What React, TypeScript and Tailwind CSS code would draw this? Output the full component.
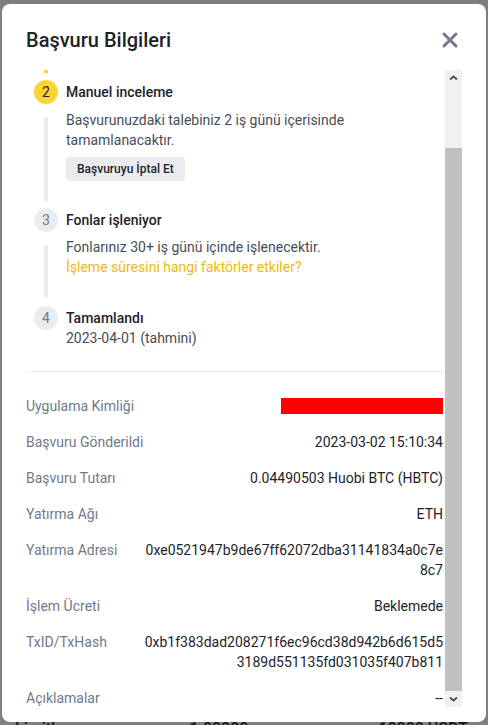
import { useLayoutEffect, useRef } from "react";

/**
 * Application details modal (Başvuru Bilgileri).
 * Timeline of the refund steps, then a list of key/value rows.
 * The body is scrolled to the bottom; the scrollbar beside it is drawn
 * by hand so it looks the same wherever the page is shot.
 */

const font = { fontFamily: "Roboto, 'Liberation Sans', sans-serif" };

type Row = { label: string; value?: string[]; redacted?: boolean };

const rows: Row[] = [
  { label: "Uygulama Kimliği", redacted: true },
  { label: "Başvuru Gönderildi", value: ["2023-03-02 15:10:34"] },
  { label: "Başvuru Tutarı", value: ["0.04490503 Huobi BTC (HBTC)"] },
  { label: "Yatırma Ağı", value: ["ETH"] },
  {
    label: "Yatırma Adresi",
    value: ["0xe0521947b9de67ff62072dba31141834a0c7e", "8c7"],
  },
  { label: "İşlem Ücreti", value: ["Beklemede"] },
  {
    label: "TxID/TxHash",
    value: ["0xb1f383dad208271f6ec96cd38d942b6d615d5", "3189d551135fd031035f407b811"],
  },
  { label: "Açıklamalar", value: ["--"] },
];

function StepDot({ n, active }: { n: number; active?: boolean }) {
  return (
    <span
      className={[
        "flex h-6 w-6 shrink-0 items-center justify-center rounded-full text-sm",
        active ? "bg-[#FCD535] text-[#1E2329]" : "bg-[#EAECEF] text-[#707A8A]",
      ].join(" ")}
    >
      {n}
    </span>
  );
}

function CloseIcon() {
  return (
    <svg width="24" height="24" viewBox="0 0 24 24" fill="none">
      <path
        d="M6 6L18 18M18 6L6 18"
        stroke="#707A8A"
        strokeWidth="3"
        strokeLinecap="round"
      />
    </svg>
  );
}

function Chevron({ down }: { down?: boolean }) {
  return (
    <svg width="9" height="6" viewBox="0 0 9 6" fill="none">
      <path
        d={down ? "M1 1.5L4.5 4.5L8 1.5" : "M1 4.5L4.5 1.5L8 4.5"}
        stroke="#505050"
        strokeWidth="2"
      />
    </svg>
  );
}

function Scrollbar() {
  return (
    <div className="mb-px flex w-[17px] shrink-0 flex-col bg-[#F1F1F1]">
      <div className="flex h-4 items-center justify-center">
        <Chevron />
      </div>
      <div className="h-[62px]" />
      <div className="flex-1 bg-[#C1C1C1]" />
      <div className="flex h-4 items-center justify-center">
        <Chevron down />
      </div>
    </div>
  );
}

export default function App() {
  const scroller = useRef<HTMLDivElement>(null);

  useLayoutEffect(() => {
    const el = scroller.current;
    if (el) el.scrollTop = el.scrollHeight;
  }, []);

  return (
    <div className="relative h-[725px] w-[488px] overflow-hidden bg-[#7f7f7f]" style={font}>
      {/* page behind the overlay, only its edge shows */}
      <div className="absolute left-0 right-0 top-[717px] flex text-base font-medium text-[#141517]">
        <span className="ml-[15px]">Limitler</span>
        <span className="ml-[120px]">1.00000</span>
        <span className="ml-[130px]">10000 USDT</span>
      </div>

      <div className="relative ml-[2px] mt-[4px] flex h-[718px] w-[484px] flex-col rounded-[8px] bg-white px-6 pb-[14px] pt-[22px]">
        <div className="flex h-7 items-center justify-between">
          <h2 className="text-[20px] font-medium leading-7 text-[#1E2329]">Başvuru Bilgileri</h2>
          <button type="button" aria-label="Kapat">
            <CloseIcon />
          </button>
        </div>

        <div className="mt-4 flex min-h-0 flex-1">
          <div ref={scroller} className="min-w-0 flex-1 overflow-hidden">
            {/* Step 1 */}
            <div className="flex">
              <div className="flex w-10 flex-col items-center">
                <StepDot n={1} active />
                <span className="mb-[7px] mt-[13px] w-1 flex-1 bg-[#FCD535]" />
              </div>
              <div className="pb-[33px]">
                <p className="text-sm font-medium leading-6 text-[#1E2329]">Başvuru gönderildi</p>
                <p className="mt-[6px] text-sm leading-5 text-[#474D57]">2023-03-02 15:10:34</p>
              </div>
            </div>

            {/* Step 2 */}
            <div className="flex">
              <div className="flex w-10 flex-col items-center">
                <StepDot n={2} active />
                <span className="mb-[6px] mt-[13px] w-1 flex-1 bg-[#EAECEF]" />
              </div>
              <div className="pb-[27px]">
                <p className="text-sm font-medium leading-6 text-[#1E2329]">Manuel inceleme</p>
                <p className="mt-[6px] text-sm leading-5 text-[#474D57]">
                  Başvurunuzdaki talebiniz 2 iş günü içerisinde
                  <br />
                  tamamlanacaktır.
                </p>
                <button
                  type="button"
                  className="mt-[7px] h-6 rounded-[4px] bg-[#EAECEF] px-[11px] text-xs font-medium text-[#1E2329]"
                >
                  Başvuruyu İptal Et
                </button>
              </div>
            </div>

            {/* Step 3 */}
            <div className="flex">
              <div className="flex w-10 flex-col items-center">
                <StepDot n={3} />
                <span className="mb-[8px] mt-[13px] w-1 flex-1 bg-[#EAECEF]" />
              </div>
              <div className="pb-[29px]">
                <p className="text-sm font-medium leading-6 text-[#1E2329]">Fonlar işleniyor</p>
                <p className="mt-[5px] text-sm leading-5 text-[#474D57]">
                  Fonlarınız 30+ iş günü içinde işlenecektir.
                </p>
                <a className="block text-sm leading-5 text-[#F0B90B]">
                  İşleme süresini hangi faktörler etkiler?
                </a>
              </div>
            </div>

            {/* Step 4 */}
            <div className="flex">
              <div className="flex w-10 flex-col items-center">
                <StepDot n={4} />
              </div>
              <div className="pt-[2px]">
                <p className="text-sm font-medium leading-5 text-[#1E2329]">Tamamlandı</p>
                <p className="text-sm leading-5 text-[#474D57]">2023-04-01 (tahmini)</p>
              </div>
            </div>

            <div className="mt-[23px] h-px bg-[#EAECEF]" />

            <dl className="mt-6 flex flex-col gap-4 pr-[2px] text-sm leading-5">
              {rows.map((r) => (
                <div key={r.label} className="flex items-start justify-between gap-4">
                  <dt className="shrink-0 text-[#707A8A]">{r.label}</dt>
                  {r.redacted ? (
                    <dd className="mt-[2px] h-4 w-[162px] bg-[#ff0000]" />
                  ) : (
                    <dd className="text-right text-[#1E2329]">
                      {r.value!.map((line) => (
                        <span key={line} className="block">
                          {line}
                        </span>
                      ))}
                    </dd>
                  )}
                </div>
              ))}
            </dl>
          </div>
          <Scrollbar />
        </div>
      </div>
    </div>
  );
}
